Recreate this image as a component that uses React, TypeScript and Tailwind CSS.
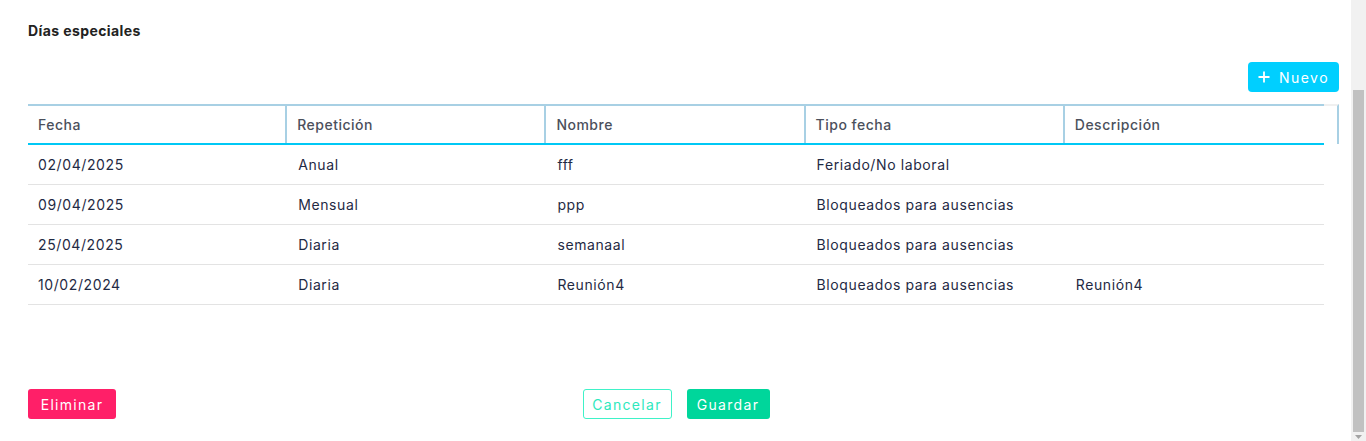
import React from "react";

const headers = ["Fecha", "Repetición", "Nombre", "Tipo fecha", "Descripción"];
const rows = [
  ["02/04/2025", "Anual", "fff", "Feriado/No laboral", ""],
  ["09/04/2025", "Mensual", "ppp", "Bloqueados para ausencias", ""],
  ["25/04/2025", "Diaria", "semanaal", "Bloqueados para ausencias", ""],
  ["10/02/2024", "Diaria", "Reunión4", "Bloqueados para ausencias", "Reunión4"],
];

export default function App() {
  return (
    <div
      className="flex h-[441px] w-[1366px] overflow-hidden bg-white"
      style={{ fontFamily: "Inter, 'Noto Sans', sans-serif" }}
    >
      <div className="flex min-w-0 flex-1 flex-col pl-[28px] pr-[12px]">
        <h2 className="mt-[22px] text-[14px] font-bold leading-[18px] tracking-[0.4px] text-[#222222]">Días especiales</h2>

        <div className="mt-[22px] flex justify-end">
          <button className="flex h-[30px] w-[91px] items-center justify-center gap-[9px] rounded-[4px] bg-[#00cfff] text-[14px] tracking-[1.5px] text-white">
            <svg width="12" height="12" viewBox="0 0 12 12" className="shrink-0">
              <path d="M6 0.5V11.5M0.5 6H11.5" stroke="white" strokeWidth="1.8" />
            </svg>
            <span>Nuevo</span>
          </button>
        </div>

        <div className="mt-[12px] flex">
          <div className="flex-1">
            <div className="grid grid-cols-5 border-t-2 border-b-2 border-t-[#a8d0e4] border-b-[#00c8f5]">
              {headers.map((h, i) => (
                <div
                  key={h}
                  className={`flex h-[37px] items-center px-[10px] text-[14px] font-medium tracking-[0.5px] text-[#4b505c] ${
                    i < 4 ? "border-r-2 border-[#a8d0e4]" : ""
                  }`}
                >
                  {h}
                </div>
              ))}
            </div>
            {rows.map((r, ri) => (
              <div key={ri} className="grid h-[40px] grid-cols-5 border-b border-[#e3e3e3]">
                {r.map((c, ci) => (
                  <div
                    key={ci}
                    className={`flex items-center text-[14px] tracking-[0.6px] text-[#1f2a44] ${ci === 0 ? "px-[10px]" : "px-[11px]"}`}
                  >
                    {c}
                  </div>
                ))}
              </div>
            ))}
          </div>
          <div className="h-[40px] w-[15px] border-t-2 border-r-2 border-t-[#f0f0f0] border-r-[#a8d0e4]" />
        </div>

        <div className="mt-[84px] mr-[15px] grid grid-cols-[1fr_auto_1fr] items-center">
          <div>
            <button className="h-[30px] w-[88px] rounded-[3px] bg-[#ff1f68] text-[14px] tracking-[1.3px] text-white">
              Eliminar
            </button>
          </div>
          <div className="flex gap-[15px]">
            <button className="h-[30px] w-[89px] rounded-[3px] border border-[#3ff2c8] text-[14px] tracking-[1.3px] text-[#2ee8bd]">
              Cancelar
            </button>
            <button className="h-[30px] w-[83px] rounded-[3px] bg-[#00d69b] text-[14px] tracking-[1.3px] text-white">
              Guardar
            </button>
          </div>
          <div />
        </div>
      </div>

      <div className="flex h-full w-[15px] flex-col bg-[#f1f1f1]">
        <div className="h-[90px]" />
        <div className="mx-[2px] h-[342px] bg-[#c1c1c1]" />
        <div className="flex flex-1 items-center justify-center">
          <svg width="7" height="4" viewBox="0 0 7 4">
            <path d="M0 0H7L3.5 4Z" fill="#a3a3a3" />
          </svg>
        </div>
      </div>
    </div>
  );
}
